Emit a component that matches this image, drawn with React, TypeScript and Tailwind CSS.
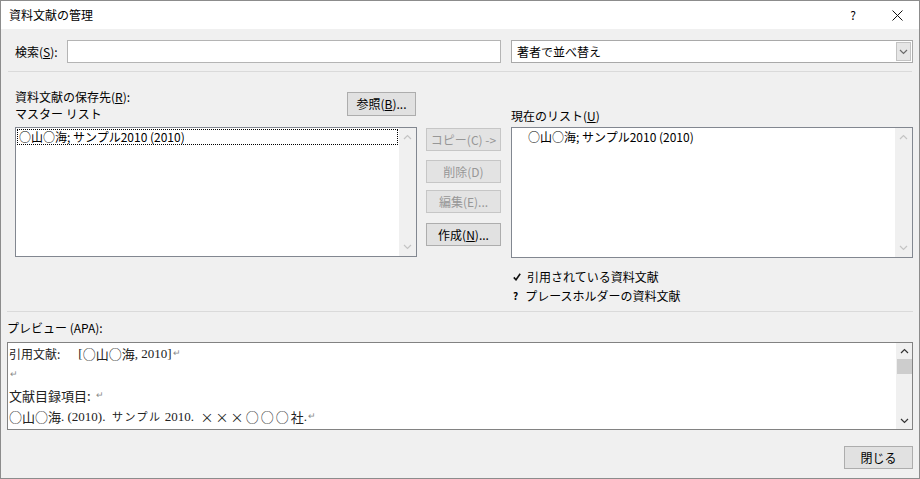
import React from "react";

const ui = "font-['Noto_Sans_CJK_JP','Noto_Sans',sans-serif]";
const serif = "font-['Liberation_Serif','Noto_Sans_CJK_JP',serif]";

function Chevron({ up, color = "#c4c4c4" }: { up?: boolean; color?: string }) {
  return (
    <svg width="9" height="6" viewBox="0 0 9 6">
      <polyline
        points={up ? "1,5 4.5,1.5 8,5" : "1,1 4.5,4.5 8,1"}
        fill="none"
        stroke={color}
        strokeWidth="1.2"
      />
    </svg>
  );
}

function Btn({
  children,
  disabled,
  className = "",
}: {
  children: React.ReactNode;
  disabled?: boolean;
  className?: string;
}) {
  return (
    <div
      className={
        "flex h-[23px] items-center justify-center border " +
        (disabled
          ? "border-[#c6c6c6] bg-[#e3e3e3] text-[#979797] "
          : "border-[#adadad] bg-[#e1e1e1] text-black ") +
        className
      }
    >
      {children}
    </div>
  );
}

// list box with a greyed-out vertical scrollbar
function ListBox({ h, children }: { h: string; children?: React.ReactNode }) {
  return (
    <div className={"flex border border-[#828790] bg-white " + h}>
      <div className="flex-1 p-[1px]">{children}</div>
      <div className="flex w-[17px] flex-col items-center justify-between bg-[#f0f0f0] py-[6px]">
        <Chevron up />
        <Chevron />
      </div>
    </div>
  );
}

// CJK run inside the serif preview
function J({ children, className = "" }: { children: React.ReactNode; className?: string }) {
  return <span className={"font-['Noto_Sans_CJK_JP',sans-serif] " + className}>{children}</span>;
}

function Ret({ className = "ml-[1px]" }: { className?: string }) {
  return <span className={"text-[9px] text-[#8a8a8a] " + className}>↵</span>;
}

export default function App() {
  return (
    <div
      className={
        "flex h-[479px] w-[920px] flex-col overflow-hidden border border-[#8c8c8c] bg-[#f0f0f0] text-[12px] text-black " +
        ui
      }
    >
      {/* Title bar */}
      <div className="flex h-[28px] items-center bg-white pl-[8px]">
        <span className="flex-1 text-[12px]">資料文献の管理</span>
        <span className="mr-[36px] text-[12px]">?</span>
        <svg className="mr-[16px]" width="11" height="11" viewBox="0 0 11 11">
          <path d="M0.5 0.5 L10.5 10.5 M10.5 0.5 L0.5 10.5" stroke="#111" strokeWidth="1" />
        </svg>
      </div>

      {/* Search row */}
      <div className="mt-[11px] flex pl-[14px]">
        <div className="flex h-[23px] w-[52px] items-center">
          検索(<u>S</u>):
        </div>
        <div className="h-[23px] w-[434px] border border-[#b4b4b4] bg-white" />
        <div className="ml-[10px] flex h-[23px] w-[402px] items-center border border-[#a9a9a9] bg-white">
          <span className="flex-1 pl-[5px]">著者で並べ替え</span>
          <div className="m-[1px] flex h-[19px] w-[15px] items-center justify-center border border-[#c3c3c3] bg-[#e6e6e6]">
            <Chevron color="#6a6a6a" />
          </div>
        </div>
      </div>

      <div className="mx-[7px] mt-[8px] border-t border-[#dadada]" />

      {/* Main lists */}
      <div className="flex h-[239px] pl-[14px]">
        <div className="w-[402px]">
          <div className="flex h-[55px] justify-between">
            <div className="pt-[16px] leading-[17px]">
              <div>
                資料文献の保存先(<u>R</u>):
              </div>
              <div>マスター リスト</div>
            </div>
            <Btn className="mr-[1px] mt-[20px] h-[24px] w-[69px]">
              参照(<u>B</u>)...
            </Btn>
          </div>
          <ListBox h="h-[130px]">
            <div className="border border-dotted border-black pl-[1px] leading-[14px]">
              ○山○海; サンプル2010 (2010)
            </div>
          </ListBox>
        </div>

        <div className="ml-[9px] w-[75px] pt-[56px]">
          <Btn disabled>コピー(C) -&gt;</Btn>
          <Btn disabled className="mt-[9px]">
            削除(D)
          </Btn>
          <Btn disabled className="mt-[7px]">
            編集(E)...
          </Btn>
          <Btn className="mt-[10px]">
            作成(<u>N</u>)...
          </Btn>
        </div>

        <div className="ml-[10px] w-[402px] pt-[35px]">
          <div className="leading-[17px]">
            現在のリスト(<u>U</u>)
          </div>
          <div className="mt-[3px]">
            <ListBox h="h-[131px]">
              <div className="pl-[15px] leading-[16px]">○山○海; サンプル2010 (2010)</div>
            </ListBox>
          </div>
          <div className="mt-[9px] leading-[19px]">
            <div className="flex items-center">
              <svg className="ml-[2px] mr-[6px]" width="8" height="8" viewBox="0 0 8 8">
                <path d="M0.8 4.4 L3 6.8 L7.2 0.8" fill="none" stroke="#111" strokeWidth="1.6" />
              </svg>
              引用されている資料文献
            </div>
            <div className="flex items-center">
              <span className="ml-[2px] mr-[7px] text-[10px] font-bold">?</span>
              プレースホルダーの資料文献
            </div>
          </div>
        </div>
      </div>

      <div className="mx-[6px] border-t border-[#dadada]" />

      {/* Preview */}
      <div className="ml-[6px] mt-[7px] leading-[17px]">プレビュー (APA):</div>
      <div className="ml-[6px] mt-[6px] flex h-[88px] w-[906px] border border-[#828282] bg-white">
        <div className={"flex-1 overflow-hidden pl-[1px] text-[13px] text-[#222] " + serif}>
          <div className="flex h-[21px] items-center whitespace-pre">
            <J className="text-[12px]">引用文献:</J>
            <span className="inline-block w-[18px]" />[<J>○山○海</J>, 2010]
            <Ret />
          </div>
          <div className="flex h-[21px] items-center">
            <Ret />
          </div>
          <div className="flex h-[21px] items-center whitespace-pre">
            <J>文献目録項目:</J>
            <Ret className="ml-[5px]" />
          </div>
          <div className="flex h-[21px] items-center whitespace-pre">
            <J>○山○海</J>. (2010).  <J className="text-[11px] tracking-[1.5px]">サンプル</J> 2010.  <J className="tracking-[2px]">×××</J>
            <J className="tracking-[2px]">○○○</J>
            <J>社</J>.
            <Ret />
          </div>
        </div>
        <div className="flex w-[16px] flex-col items-center bg-[#f0f0f0]">
          <div className="flex h-[16px] items-center justify-center">
            <Chevron up color="#333" />
          </div>
          <div className="h-[15px] w-[15px] bg-[#cdcdcd]" />
          <div className="flex-1" />
          <div className="flex h-[16px] items-center justify-center">
            <Chevron color="#333" />
          </div>
        </div>
      </div>

      <div className="mt-[16px] flex justify-end pr-[6px]">
        <Btn className="w-[69px]">閉じる</Btn>
      </div>
    </div>
  );
}
